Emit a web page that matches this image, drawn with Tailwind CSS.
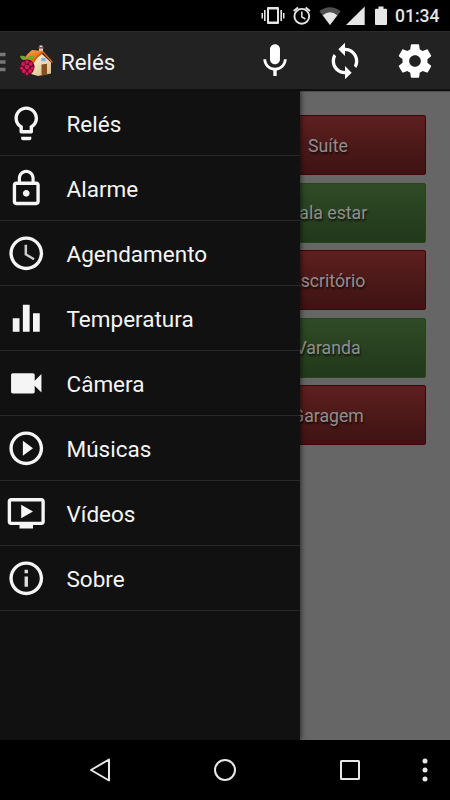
<!DOCTYPE html>
<html lang="pt-BR">
<head>
<meta charset="utf-8">
<title>Relés</title>
<script src="https://cdn.jsdelivr.net/npm/@tailwindcss/browser@4"></script>
</head>
<body class="bg-black">
<div class="w-[450px] h-[800px] overflow-hidden flex flex-col bg-black font-[Roboto,sans-serif] text-white">
  <!-- Status bar -->
  <div class="h-[31px] shrink-0 flex items-center justify-end pr-[10px]">
    <svg class="w-[190px] h-[31px] shrink-0 mr-[-54px]" viewBox="260 0 190 31" fill="#e6e6e6">
      <path fill-rule="evenodd" d="M268 7h10q1 0 1 1v15q0 1-1 1h-10q-1 0-1-1v-15q0-1 1-1zM269 9.500v12h8v-12z"/>
      <path d="M264 10h1.600v11h-1.600zM261.500 13h1.500v5.500h-1.500zM280.400 10h1.600v11h-1.600zM283 13h1.500v5.500h-1.500z"/>
      <g fill="none" stroke="#e6e6e6" stroke-width="1.900"><circle cx="301.800" cy="16.300" r="7.400"/><path d="M301.800 11.500v5.300l3.600 2.200" stroke-width="1.500"/><path d="M293.700 11l4.300-3.600M309.900 11l-4.300-3.600"/></g>
      <path fill="#505050" d="M319.300 11.300Q330 3.200 340.700 11.300L330 25z"/>
      <path d="M322.700 15.300Q330 9.400 337.300 15.300L330 25z"/>
      <path d="M364.700 6.500V25H346z"/>
      <path d="M378.500 6.500h5v2.200h2.500q1 0 1 1V24q0 1-1 1h-10q-1 0-1-1V9.700q0-1 1-1h2.500z"/>
    </svg>
    <span class="w-[44px] -ml-px mr-px text-[17.5px] leading-[31px] font-medium text-[#e6e6e6] pt-[2px]">01:34</span>
  </div>

  <!-- Action bar -->
  <div class="h-[60px] shrink-0 flex items-center bg-[#222222] border-t border-t-[#2b2b2b] border-b-2 border-b-[#101010]">
    <svg class="w-[6px] h-[20px] shrink-0 mt-[3px]" viewBox="0 0 6 20" fill="#777"><path d="M0 .7h5.500v3.500H0zM0 8.200h5.500v3.500H0zM0 15.700h5.500v3.500H0z"/></svg>
    <svg class="w-[37px] h-[36px] shrink-0 ml-[12px] mt-[3px]" viewBox="0 0 37 36">
      <defs>
        <linearGradient id="roof" x1="0" y1="0" x2=".6" y2="1"><stop offset="0" stop-color="#ffb04d"/><stop offset="1" stop-color="#d4530b"/></linearGradient>
        <linearGradient id="wall" x1="0" y1="0" x2=".6" y2="1"><stop offset="0" stop-color="#fff8dd"/><stop offset="1" stop-color="#dfc48c"/></linearGradient>
      </defs>
      <path fill="#d8c8b8" d="M21 3.500h4v5h-4z"/><path fill="#8d4a4a" d="M20.300 3h5.400v1.600h-5.400z"/><path fill="#ddd" d="M21.500 1.500h3v1.500h-3z"/>
      <path fill="url(#wall)" d="M13.500 17.500L24 10 33 18.500V29.500L20 32l-7-2z"/>
      <path fill="url(#roof)" d="M14 6L25 7Q20 11 15 19.500L6 14.500Q9 10 14 6z"/>
      <path fill="none" stroke="#dc6212" stroke-width="1.500" stroke-linecap="round" stroke-linejoin="round" d="M15 19.200Q19 11.500 25 8L34 18"/>
      <path fill="#7db5d8" d="M23.200 14h4.300v3.300h-4.300z"/>
      <path fill="#865023" d="M23.500 20.500l5.500-.8v11l-5.500 1z"/>
      <path fill="#69ab31" d="M9 16.500C5 17 2.300 15 2 12c4-1 7 .8 7 4.500zM9 16.500C13 17 15.700 15 16 12c-4-1-7 .8-7 4.500z"/>
      <path fill="#65082b" d="M9 15.500q4.200 0 6 3.200 2.500 2.800 1 6.800-1.300 4.500-7 6.500-5.700-2-7-6.500-1.500-4 1-6.800 1.800-3.200 6-3.200z"/>
      <g fill="#d51c54"><circle cx="9" cy="18" r="1.800"/><circle cx="5.200" cy="20" r="1.900"/><circle cx="12.800" cy="20" r="1.900"/><circle cx="9" cy="23" r="2.300"/><circle cx="3.600" cy="24.300" r="1.500"/><circle cx="14.400" cy="24.300" r="1.500"/><circle cx="5.900" cy="27" r="1.900"/><circle cx="12.100" cy="27" r="1.900"/><circle cx="9" cy="29.700" r="1.400"/></g>
    </svg>
    <span class="ml-[6px] text-[22.3px] leading-[30px] text-[#f3f3f3] pt-[2px]">Relés</span>
    <div class="ml-auto flex items-center gap-[30px] pr-[15px] pt-px">
      <svg class="size-10" viewBox="0 0 24 24" fill="#fff"><path d="M12 14c1.660 0 2.990-1.340 2.990-3L15 5c0-1.660-1.340-3-3-3S9 3.340 9 5v6c0 1.660 1.340 3 3 3zm5.300-3c0 3-2.540 5.100-5.300 5.100S6.700 14 6.700 11H5c0 3.410 2.720 6.230 6 6.720V21h2v-3.280c3.280-.48 6-3.300 6-6.720h-1.700z"/></svg>
      <svg class="size-10" viewBox="0 0 24 24" fill="#fff"><path d="M12 4V1L8 5l4 4V6c3.310 0 6 2.690 6 6 0 1.010-.25 1.970-.7 2.800l1.460 1.460C19.540 15.030 20 13.570 20 12c0-4.420-3.580-8-8-8zm0 14c-3.310 0-6-2.690-6-6 0-1.010.25-1.970.7-2.800L5.240 7.740C4.460 8.970 4 10.430 4 12c0 4.420 3.580 8 8 8v3l4-4-4-4v3z"/></svg>
      <svg class="size-10" viewBox="0 0 24 24" fill="#fff"><path d="M19.430 12.980c.04-.32.07-.64.07-.98s-.03-.66-.07-.98l2.110-1.650c.19-.15.24-.42.12-.64l-2-3.460c-.12-.22-.39-.3-.61-.22l-2.490 1c-.52-.4-1.080-.73-1.690-.98l-.38-2.650C14.460 2.180 14.250 2 14 2h-4c-.25 0-.46.18-.49.42l-.38 2.650c-.61.25-1.170.59-1.690.98l-2.490-1c-.23-.09-.49 0-.61.22l-2 3.460c-.13.22-.07.49.12.64l2.110 1.650c-.04.32-.07.65-.07.98s.03.66.07.98l-2.110 1.650c-.19.15-.24.42-.12.64l2 3.460c.12.22.39.3.61.22l2.490-1c.52.4 1.080.73 1.690.98l.38 2.650c.03.24.24.42.49.42h4c.25 0 .46-.18.49-.42l.38-2.650c.61-.25 1.170-.59 1.690-.98l2.490 1c.23.09.49 0 .61-.22l2-3.460c.12-.22.07-.49-.12-.64l-2.110-1.650zM12 15.500c-1.930 0-3.500-1.570-3.500-3.500s1.570-3.500 3.500-3.500 3.500 1.570 3.500 3.500-1.570 3.500-3.500 3.500z"/></svg>
    </div>
  </div>

  <!-- Dimmed content with the open drawer over it -->
  <div class="relative h-[649px] shrink-0 bg-[#666666] overflow-hidden">
    <div class="flex flex-col gap-[7.5px] pt-6 pl-[230px] pr-6 text-[17.7px] text-[#8f8f8f] [text-shadow:1px_2px_2px_rgba(0,0,0,0.7)]">
      <div class="h-[60px] flex items-center justify-center pt-[2px] rounded-[2px] border border-[#400507] bg-linear-to-b from-[#5e1f1f] to-[#3d1313]">Suíte</div>
      <div class="h-[60px] flex items-center justify-center pt-[2px] rounded-[2px] border border-[#264713] bg-linear-to-b from-[#2f4b26] to-[#22381a]">Sala estar</div>
      <div class="h-[60px] flex items-center justify-center pt-[2px] rounded-[2px] border border-[#400507] bg-linear-to-b from-[#5e1f1f] to-[#3d1313]">Escritório</div>
      <div class="h-[60px] flex items-center justify-center pt-[2px] rounded-[2px] border border-[#264713] bg-linear-to-b from-[#2f4b26] to-[#22381a]">Varanda</div>
      <div class="h-[60px] flex items-center justify-center pt-[2px] rounded-[2px] border border-[#400507] bg-linear-to-b from-[#5e1f1f] to-[#3d1313]">Garagem</div>
    </div>
    <div class="absolute inset-x-0 top-0 h-px bg-[#4c4c4c]"></div>
    <nav class="absolute left-0 top-0 w-[300px] h-full bg-[#111111] shadow-[1px_0_5px_rgba(0,0,0,0.6)] text-[22.5px] text-[#f5f5f5]">
      <div class="h-[65px] flex items-center gap-5 pl-[6px] pt-px border-b border-[#282828]">
        <svg class="size-[40.5px]" viewBox="0 0 24 24" fill="#f5f5f5"><path d="M9 21c0 .55.45 1 1 1h4c.55 0 1-.45 1-1v-1H9v1zm3-19C8.140 2 5 5.140 5 9c0 2.380 1.190 4.470 3 5.740V17c0 .55.45 1 1 1h6c.55 0 1-.45 1-1v-2.260c1.810-1.270 3-3.360 3-5.740 0-3.860-3.140-7-7-7zm2.850 11.100l-.85.6V16h-4v-2.300l-.85-.6C7.800 12.160 7 10.630 7 9c0-2.760 2.240-5 5-5s5 2.240 5 5c0 1.630-.8 3.160-2.150 4.100z"/></svg>
        <span class="pt-[3px]">Relés</span>
      </div>
      <div class="h-[65px] flex items-center gap-5 pl-[6px] pt-px border-b border-[#282828]">
        <svg class="size-[40.5px]" viewBox="0 0 24 24" fill="#f5f5f5"><path d="M12 17c1.100 0 2-.9 2-2s-.9-2-2-2-2 .9-2 2 .9 2 2 2zm6-9h-1V6c0-2.760-2.240-5-5-5S7 3.240 7 6v2H6c-1.100 0-2 .9-2 2v10c0 1.100.9 2 2 2h12c1.100 0 2-.9 2-2V10c0-1.100-.9-2-2-2zM8.900 6c0-1.710 1.390-3.100 3.100-3.100s3.100 1.390 3.100 3.100v2H8.900V6zM18 20H6V10h12v10z"/></svg>
        <span class="pt-[3px]">Alarme</span>
      </div>
      <div class="h-[65px] flex items-center gap-5 pl-[6px] pt-px border-b border-[#282828]">
        <svg class="size-[40.5px]" viewBox="0 0 24 24" fill="#f5f5f5"><path d="M11.990 2C6.470 2 2 6.480 2 12s4.470 10 9.990 10C17.520 22 22 17.520 22 12S17.520 2 11.990 2zM12 20c-4.420 0-8-3.580-8-8s3.580-8 8-8 8 3.580 8 8-3.580 8-8 8z"/><path fill="#ccc" d="M12.500 7H11v6l5.250 3.150.75-1.230-4.500-2.670z"/></svg>
        <span class="pt-[3px]">Agendamento</span>
      </div>
      <div class="h-[65px] flex items-center gap-5 pl-[6px] pt-px border-b border-[#282828]">
        <svg class="size-[40.5px]" viewBox="0 0 24 24" fill="#f5f5f5"><path d="M10 20h4V4h-4v16zm-6 0h4v-8H4v8zM16 9v11h4V9h-4z"/></svg>
        <span class="pt-[3px]">Temperatura</span>
      </div>
      <div class="h-[65px] flex items-center gap-5 pl-[6px] pt-px border-b border-[#282828]">
        <svg class="size-[40.5px]" viewBox="0 0 24 24" fill="#f5f5f5"><path d="M17 10.500V7c0-.55-.45-1-1-1H4c-.55 0-1 .45-1 1v10c0 .55.45 1 1 1h12c.55 0 1-.45 1-1v-3.500l4 4v-11l-4 4z"/></svg>
        <span class="pt-[3px]">Câmera</span>
      </div>
      <div class="h-[65px] flex items-center gap-5 pl-[6px] pt-px border-b border-[#282828]">
        <svg class="size-[40.5px]" viewBox="0 0 24 24" fill="#f5f5f5"><path d="M10 16.500l6-4.500-6-4.500v9zM12 2C6.480 2 2 6.480 2 12s4.480 10 10 10 10-4.480 10-10S17.520 2 12 2zm0 18c-4.410 0-8-3.590-8-8s3.590-8 8-8 8 3.590 8 8-3.590 8-8 8z"/></svg>
        <span class="pt-[3px]">Músicas</span>
      </div>
      <div class="h-[65px] flex items-center gap-5 pl-[6px] pt-px border-b border-[#282828]">
        <svg class="size-[40.5px]" viewBox="0 0 24 24" fill="#f5f5f5"><path d="M21 3H3c-1.110 0-2 .89-2 2v12c0 1.100.89 2 2 2h5v2h8v-2h5c1.100 0 1.990-.9 1.990-2L23 5c0-1.100-.9-2-2-2zm0 14H3V5h18v12zm-5-6l-7 4V7z"/></svg>
        <span class="pt-[3px]">Vídeos</span>
      </div>
      <div class="h-[65px] flex items-center gap-5 pl-[6px] pt-px border-b border-[#282828]">
        <svg class="size-[40.5px]" viewBox="0 0 24 24" fill="#f5f5f5"><path fill="#ddd" d="M11 17h2v-6h-2v6zM11 9h2V7h-2v2z"/><path d="M12 2C6.480 2 2 6.480 2 12s4.480 10 10 10 10-4.480 10-10S17.520 2 12 2zm0 18c-4.410 0-8-3.590-8-8s3.590-8 8-8 8 3.590 8 8-3.590 8-8 8z"/></svg>
        <span class="pt-[3px]">Sobre</span>
      </div>
    </nav>
  </div>

  <!-- Navigation bar -->
  <div class="h-[60px] shrink-0 flex items-center pl-[88px] pr-[20px]">
    <svg class="w-[24px] h-[26px]" viewBox="0 0 24 26" fill="none" stroke="#e8e8e8" stroke-width="2" stroke-linejoin="round"><path d="M3 13L21 2.500V23.500z"/></svg>
    <svg class="size-[24px] ml-[101px]" viewBox="0 0 24 24" fill="none" stroke="#e8e8e8" stroke-width="2"><circle cx="12" cy="12" r="10"/></svg>
    <svg class="size-[22px] ml-[102px]" viewBox="0 0 22 22" fill="none" stroke="#e8e8e8" stroke-width="2"><rect x="2" y="2" width="18" height="18" rx=".5"/></svg>
    <svg class="w-[10px] h-[26px] ml-auto" viewBox="0 0 10 26" fill="#e8e8e8"><circle cx="5" cy="4" r="2.500"/><circle cx="5" cy="13" r="2.500"/><circle cx="5" cy="22" r="2.500"/></svg>
  </div>
</div>
</body>
</html>
